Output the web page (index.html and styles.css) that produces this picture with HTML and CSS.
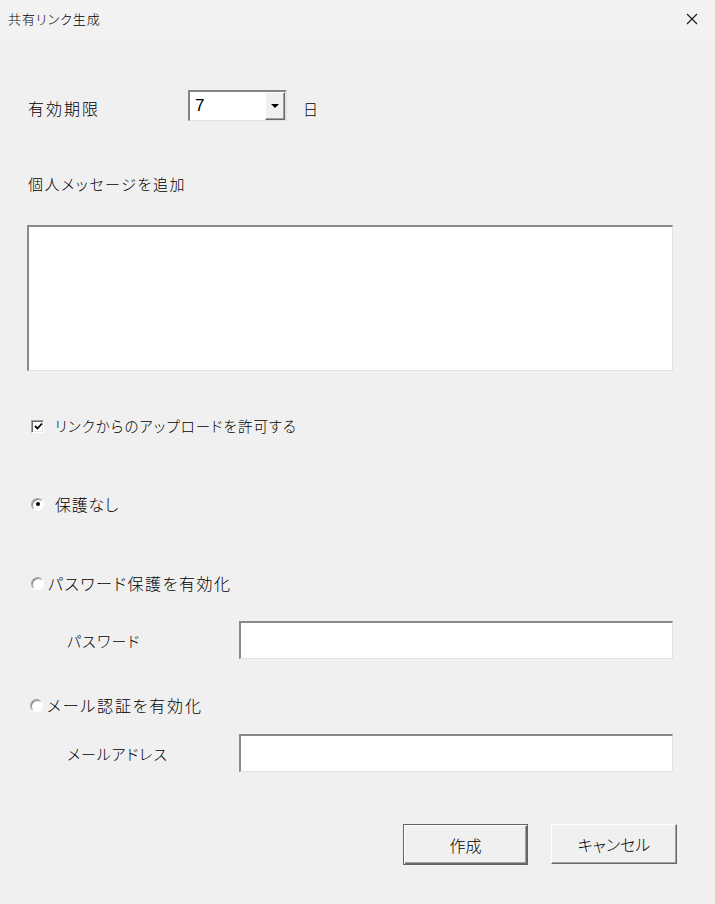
FILE: index.html
```html
<!doctype html>
<html lang="ja">
<head>
    <meta charset="utf-8"/>
    <title>共有リンク生成</title>
    <link rel="stylesheet" href="styles.css">
</head>

<body>
    <div class="dialog">
        <div class="titlebar">
            <span class="title">共有リンク生成</span>
            <svg class="close" width="12" height="12" viewBox="0 0 12 12">
                <path d="M1 1 L11 11 M11 1 L1 11" stroke="#1a1a1a" stroke-width="1.1" fill="none"/>
            </svg>
        </div>
        <div class="content">
            <div class="expiry">
                <span class="expiry-label">有効期限</span>
                <div class="combo">
                    <span class="combo-value">7</span>
                    <span class="combo-btn"><i class="arrow"></i></span>
                </div>
                <span class="unit">日</span>
            </div>

            <div class="msg-label">個人メッセージを追加</div>
            <textarea class="message"></textarea>

            <div class="check-row">
                <span class="checkbox">
                    <svg width="9" height="9" viewBox="0 0 9 9">
                        <path d="M1 4 L3.5 6.5 L8 1.5" stroke="#000" stroke-width="1.8" fill="none"/>
                    </svg>
                </span>
                <span>リンクからのアップロードを許可する</span>
            </div>

            <div class="radio-row first">
                <span class="radio checked"></span>
                <span>保護なし</span>
            </div>

            <div class="radio-row second">
                <span class="radio"></span>
                <span>パスワード保護を有効化</span>
            </div>
            <div class="field-row pw">
                <span class="field-label">パスワード</span>
                <input class="field" type="text">
            </div>

            <div class="radio-row third">
                <span class="radio"></span>
                <span>メール認証を有効化</span>
            </div>
            <div class="field-row mail">
                <span class="field-label">メールアドレス</span>
                <input class="field" type="text">
            </div>

            <div class="buttons">
                <button class="btn default">作成</button>
                <button class="btn">キャンセル</button>
            </div>
        </div>
    </div>
</body>
</html>
```

FILE: styles.css
```css
* {
    padding: 0;
    margin: 0;
    box-sizing: border-box;
}

body {
    background: #f0f0f0;
    font-family: "Noto Sans CJK JP", "Noto Sans", sans-serif;
    font-size: 15px;
    font-weight: 300;
    color: #000;
    font-feature-settings: "palt";
}

.dialog {
    width: 715px;
    height: 904px;
    background: #f0f0f0;
}

.titlebar {
    height: 38px;
    background: #f3f2f3;
    display: flex;
    align-items: center;
    justify-content: space-between;
    padding: 0 17px 0 8px;
}

.title {
    font-size: 13px;
    line-height: 16px;
    letter-spacing: 1px;
}

.content {
    padding: 0 42px 0 27px;
}

/* 有効期限 */
.expiry {
    margin-top: 52px;
    display: flex;
    align-items: center;
    height: 30px;
}

.expiry-label {
    width: 161px;
    padding-top: 5px;
    padding-left: 1px;
    font-size: 16px;
    letter-spacing: 2px;
}

.combo {
    width: 99px;
    height: 31px;
    background: #fff;
    border-style: solid;
    border-width: 2px 2px 1px 2px;
    border-color: #838383 #e3e3e3 #e3e3e3 #838383;
    display: flex;
    align-items: center;
    justify-content: space-between;
}

.combo-value {
    padding-left: 5px;
    font-family: "Liberation Sans", sans-serif;
    font-weight: 400;
    font-size: 17px;
    line-height: 20px;
}

.combo-btn {
    width: 20px;
    height: 28px;
    background: #f0f0f0;
    border-style: solid;
    border-width: 1px;
    border-color: #fff #696969 #696969 #fff;
    box-shadow: inset -1px -1px #a0a0a0;
    display: flex;
    align-items: center;
    justify-content: center;
}

.arrow {
    width: 0;
    height: 0;
    border-left: 4px solid transparent;
    border-right: 4px solid transparent;
    border-top: 4px solid #000;
}

.unit {
    margin-left: 16px;
    padding-top: 6px;
    font-size: 15px;
}

/* メッセージ */
.msg-label {
    margin-top: 54px;
    line-height: 20px;
    padding-left: 1px;
    letter-spacing: 1.6px;
}

.message {
    display: block;
    margin-top: 31px;
    width: 646px;
    height: 146px;
    resize: none;
    background: #fff;
    border-style: solid;
    border-width: 2px 1px 1px 2px;
    border-color: #898989 #e3e3e3 #e3e3e3 #898989;
    outline: none;
}

/* チェック・ラジオ */
.check-row,
.radio-row {
    display: flex;
    align-items: center;
    line-height: 20px;
    height: 20px;
    padding-left: 4px;
}

.check-row {
    margin-top: 45px;
    gap: 11px;
    font-size: 14.5px;
    letter-spacing: 1px;
}

.checkbox {
    width: 13px;
    height: 13px;
    background: #fff;
    border: 1px solid;
    border-color: #a0a0a0 #fff #fff #a0a0a0;
    box-shadow: inset 1px 1px #696969, inset -1px -1px #e3e3e3;
    display: flex;
    align-items: center;
    justify-content: center;
}

.checkbox svg {
    display: block;
    margin: 1px 0 0 1px;
}

.radio {
    width: 13px;
    height: 13px;
    border-radius: 50%;
    background: #fff;
    border: 1px solid;
    border-color: #a0a0a0 #fff #fff #a0a0a0;
    box-shadow: inset 1px 1px #8a8a8a;
    position: relative;
    flex-shrink: 0;
}

.radio.checked::after {
    content: "";
    position: absolute;
    left: 3.5px;
    top: 3.5px;
    width: 4px;
    height: 4px;
    border-radius: 50%;
    background: #000;
}

.radio-row.first {
    margin-top: 58px;
    gap: 11px;
    font-size: 16px;
    letter-spacing: 0.7px;
}

.radio-row.second {
    margin-top: 59px;
    gap: 4px;
    font-size: 16px;
    letter-spacing: 1.5px;
}

.radio-row.third {
    margin-top: 36px;
    gap: 4px;
    padding-left: 3px;
    font-size: 16px;
    letter-spacing: 1.8px;
}

/* 入力欄 */
.field-row {
    display: flex;
    align-items: center;
}

.field-row.pw {
    margin-top: 28px;
}

.field-row.mail {
    margin-top: 19px;
}

.field-label {
    width: 212px;
    padding-left: 40px;
    font-size: 15px;
}

.field-row.pw .field-label {
    letter-spacing: 1.2px;
}

.field-row.mail .field-label {
    letter-spacing: 0.9px;
}

.field {
    width: 434px;
    height: 38px;
    background: #fff;
    border-style: solid;
    border-width: 2px 1px 1px 2px;
    border-color: #898989 #e3e3e3 #e3e3e3 #898989;
    outline: none;
}

/* ボタン */
.buttons {
    margin-top: 52px;
    margin-right: -4px;
    display: flex;
    justify-content: flex-end;
    gap: 23px;
}

.btn {
    width: 126px;
    height: 40px;
    background: #f0f0f0;
    font-family: "Noto Sans CJK JP", sans-serif;
    font-size: 16px;
    font-weight: 300;
    color: #000;
    border: 1px solid;
    border-color: #fff #696969 #696969 #fff;
    box-shadow: inset -1px -1px #a0a0a0;
    font-feature-settings: "palt";
}

.btn.default {
    width: 125px;
    height: 41px;
    border-color: #646464;
    box-shadow: inset 1px 1px #fff, inset -1px -1px #696969, inset -2px -2px #a0a0a0;
}
```
